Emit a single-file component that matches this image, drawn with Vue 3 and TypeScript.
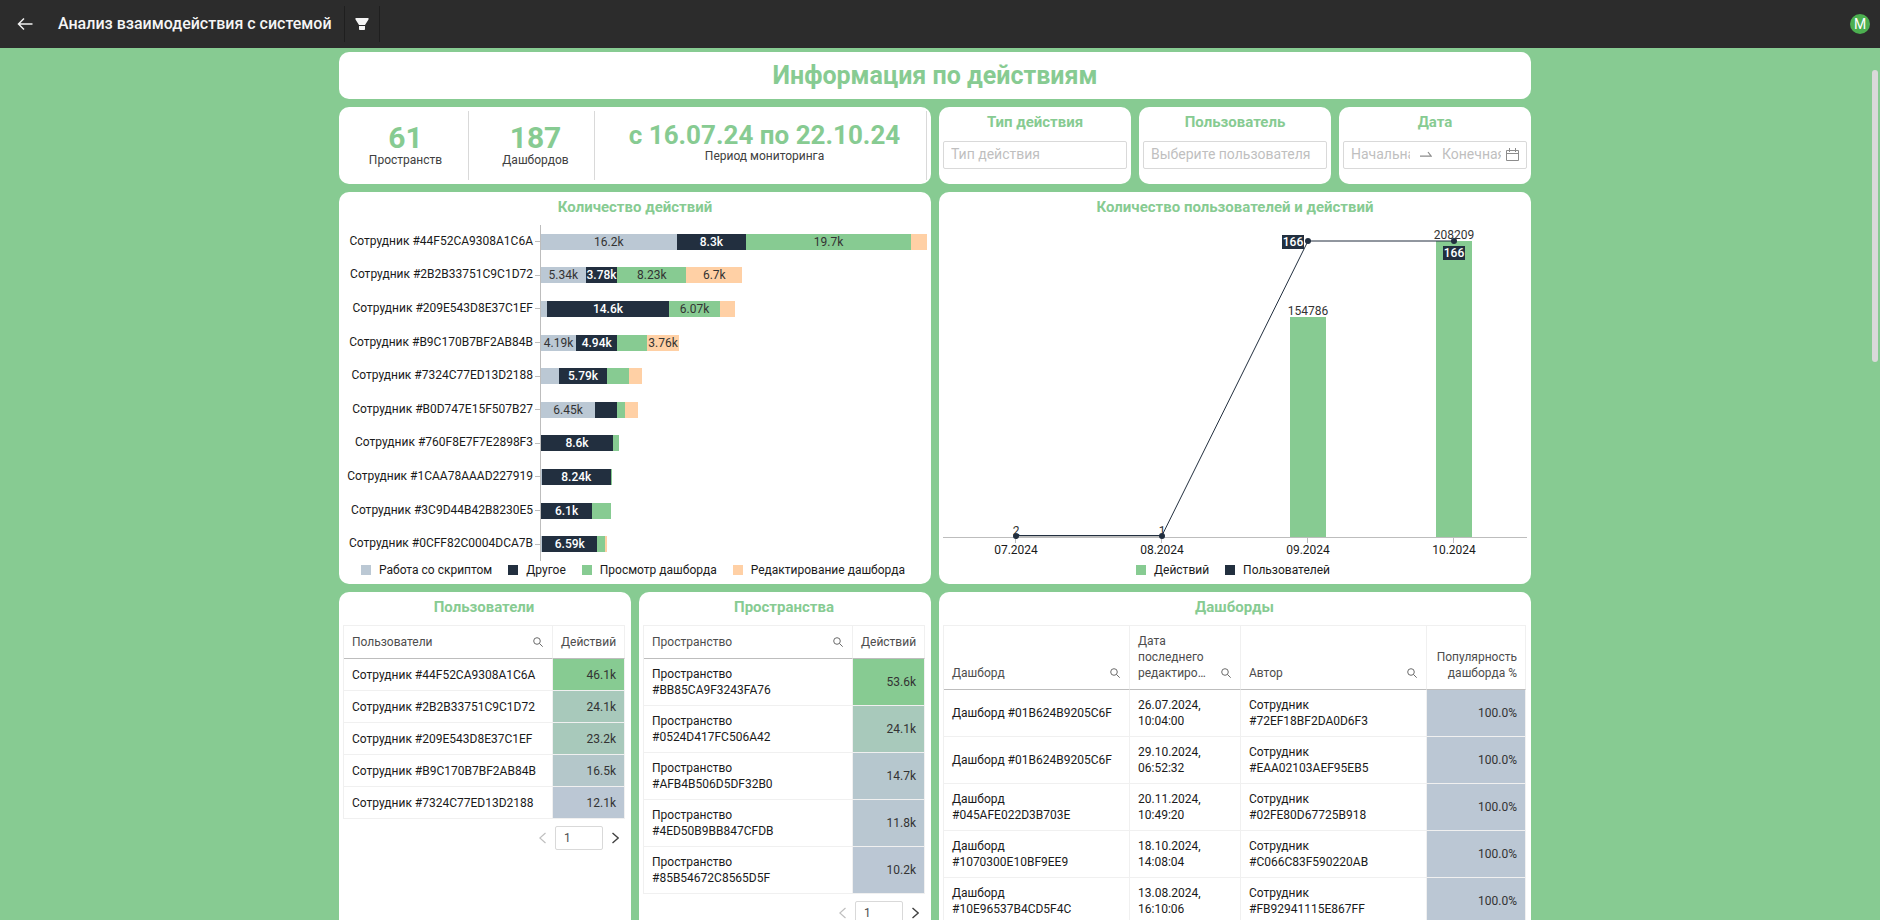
<script setup lang="ts">
import { ref } from 'vue'

interface Segment {
  key: string
  value: number
  text?: string
}
interface BarRow {
  name: string
  segments: Segment[]
}
interface RankRow {
  name: string
  value: string
  tone: string
}

const keys = ['script', 'other', 'view', 'edit']
const maxTotal = 46.1

function bar(name: string, values: number[], texts: string[]): BarRow {
  return {
    name: 'Сотрудник #' + name,
    segments: values.map((value, i) => ({ key: keys[i], value, text: texts[i] })),
  }
}

const bars: BarRow[] = [
  bar('44F52CA9308A1C6A', [16.2, 8.3, 19.7, 1.9], ['16.2k', '8.3k', '19.7k', '']),
  bar('2B2B33751C9C1D72', [5.34, 3.78, 8.23, 6.7], ['5.34k', '3.78k', '8.23k', '6.7k']),
  bar('209E543D8E37C1EF', [0.7, 14.6, 6.07, 1.76], ['', '14.6k', '6.07k', '']),
  bar('B9C170B7BF2AB84B', [4.19, 4.94, 3.57, 3.76], ['4.19k', '4.94k', '', '3.76k']),
  bar('7324C77ED13D2188', [2.13, 5.79, 2.65, 1.53], ['', '5.79k', '', '']),
  bar('B0D747E15F507B27', [6.45, 2.65, 0.9, 1.55], ['6.45k', '', '', '']),
  bar('760F8E7F7E2898F3', [0, 8.6, 0.7, 0], ['', '8.6k', '', '']),
  bar('1CAA78AAAD227919', [0.1, 8.24, 0.2, 0], ['', '8.24k', '', '']),
  bar('3C9D44B42B8230E5', [0, 6.1, 2.25, 0], ['', '6.1k', '', '']),
  bar('0CFF82C0004DCA7B', [0.15, 6.59, 0.93, 0.2], ['', '6.59k', '', '']),
]

const actionLegend = [
  { key: 'script', label: 'Работа со скриптом' },
  { key: 'other', label: 'Другое' },
  { key: 'view', label: 'Просмотр дашборда' },
  { key: 'edit', label: 'Редактирование дашборда' },
]
const userLegend = [
  { key: 'view', label: 'Действий' },
  { key: 'other', label: 'Пользователей' },
]

const months = [
  { x: 73, label: '07.2024', value: 2, top: 312, dot: 311 },
  { x: 219, label: '08.2024', value: 1, top: 312, dot: 311 },
  { x: 365, label: '09.2024', value: 154786, top: 92, dot: 16 },
  { x: 511, label: '10.2024', value: 208209, top: 16, dot: 16 },
]

const rankings: { title: string; column: string; id: string; rows: RankRow[] }[] = [
  {
    title: 'Пользователи',
    column: 'Пользователи',
    id: 'users',
    rows: [
      { name: 'Сотрудник #44F52CA9308A1C6A', value: '46.1k', tone: 'tone-1' },
      { name: 'Сотрудник #2B2B33751C9C1D72', value: '24.1k', tone: 'tone-2' },
      { name: 'Сотрудник #209E543D8E37C1EF', value: '23.2k', tone: 'tone-2' },
      { name: 'Сотрудник #B9C170B7BF2AB84B', value: '16.5k', tone: 'tone-3' },
      { name: 'Сотрудник #7324C77ED13D2188', value: '12.1k', tone: 'tone-5' },
    ],
  },
  {
    title: 'Пространства',
    column: 'Пространство',
    id: 'spaces',
    rows: [
      { name: 'Пространство #BB85CA9F3243FA76', value: '53.6k', tone: 'tone-1' },
      { name: 'Пространство #0524D417FC506A42', value: '24.1k', tone: 'tone-2' },
      { name: 'Пространство #AFB4B506D5DF32B0', value: '14.7k', tone: 'tone-4' },
      { name: 'Пространство #4ED50B9BB847CFDB', value: '11.8k', tone: 'tone-6' },
      { name: 'Пространство #85B54672C8565D5F', value: '10.2k', tone: 'tone-5' },
    ],
  },
]

const dashboards = [
  { name: '01B624B9205C6F', date: '26.07.2024, 10:04:00', author: '72EF18BF2DA0D6F3' },
  { name: '01B624B9205C6F', date: '29.10.2024, 06:52:32', author: 'EAA02103AEF95EB5' },
  { name: '045AFE022D3B703E', date: '20.11.2024, 10:49:20', author: '02FE80D67725B918' },
  { name: '1070300E10BF9EE9', date: '18.10.2024, 14:08:04', author: 'C066C83F590220AB' },
  { name: '10E96537B4CD5F4C', date: '13.08.2024, 16:10:06', author: 'FB92941115E867FF' },
]

const pages = ref<Record<string, string>>({ users: '1', spaces: '1' })
</script>

<template>
  <div class="app">
    <header class="topbar">
      <button class="icon-btn back" aria-label="Назад">
        <svg width="16" height="14" viewBox="0 0 16 14" fill="none" stroke="#f0f0f0" stroke-width="1.5">
          <path d="M15.5 7H1.5M7 1.5L1.5 7L7 12.5" />
        </svg>
      </button>
      <h1 class="topbar-title">Анализ взаимодействия с системой</h1>
      <button class="icon-btn filter" aria-label="Фильтр">
        <svg width="14" height="12" viewBox="0 0 14 12" fill="#f5f5f5">
          <path d="M0.5 0H13.5V1.5L10 7H4L0.5 1.5ZM4 8H10V11.2L9.5 12H4.5L4 11.2Z" />
        </svg>
      </button>
      <button class="avatar" aria-label="Профиль">M</button>
    </header>

    <div class="viewport">
      <main class="board">
        <section class="card hero"><h2>Информация по действиям</h2></section>

        <section class="card kpis">
          <div class="kpi"><strong>61</strong><span>Пространств</span></div>
          <div class="kpi"><strong>187</strong><span>Дашбордов</span></div>
          <div class="kpi wide"><strong>с 16.07.24 по 22.10.24</strong><span>Период мониторинга</span></div>
        </section>

        <section class="card filter-card">
          <label class="card-title" for="action-type">Тип действия</label>
          <input id="action-type" class="field" type="text" placeholder="Тип действия" />
        </section>
        <section class="card filter-card">
          <label class="card-title" for="user-name">Пользователь</label>
          <input id="user-name" class="field" type="text" placeholder="Выберите пользователя" />
        </section>
        <section class="card filter-card">
          <label class="card-title" for="date-from">Дата</label>
          <div class="field range">
            <input id="date-from" type="text" placeholder="Начальная дата" />
            <svg class="range-arrow" width="12" height="6" viewBox="0 0 12 6" fill="none" stroke="#8c8c8c" stroke-width="1.2">
              <path d="M0 5.2H11.2L8 1" />
            </svg>
            <input type="text" placeholder="Конечная дата" aria-label="Конечная дата" />
            <svg class="calendar" width="13" height="13" viewBox="0 0 13 13" fill="none" stroke="#8c8c8c">
              <path d="M0.5 2.5H12.5V12.5H0.5ZM0.5 5.5H12.5M3.5 0V4M9.5 0V4" />
            </svg>
          </div>
        </section>

        <section class="card chart">
          <h3 class="card-title">Количество действий</h3>
          <div class="bars">
            <div v-for="row in bars" :key="row.name" class="bar-row">
              <span class="bar-name">{{ row.name }}</span>
              <i class="tick"></i>
              <div class="track">
                <span
                  v-for="seg in row.segments"
                  :key="seg.key"
                  class="segment"
                  :class="seg.key"
                  :style="{ width: (seg.value / maxTotal) * 100 + '%' }"
                >{{ seg.text }}</span>
              </div>
            </div>
          </div>
          <ul class="legend">
            <li v-for="item in actionLegend" :key="item.key"><i :class="item.key"></i>{{ item.label }}</li>
          </ul>
        </section>

        <section class="card chart">
          <h3 class="card-title">Количество пользователей и действий</h3>
          <svg class="combo" viewBox="0 0 584 336" role="img" aria-label="Количество пользователей и действий">
            <rect x="73" y="311" width="146" height="2" fill="#bdbdbd" />
            <rect x="347" y="92" width="36" height="220" fill="#87cb92" />
            <rect x="493" y="16" width="36" height="296" fill="#87cb92" />
            <path d="M0 312.5H584" stroke="#bdbdbd" />
            <path v-for="m in months" :key="'t' + m.x" :d="`M${m.x - 0.5} 313V318`" stroke="#bdbdbd" />
            <text v-for="m in months" :key="'v' + m.x" :x="m.x" :y="m.top - 2" class="chart-text dark">{{ m.value }}</text>
            <path d="M73 310.5H219L365 16H511" fill="none" stroke="#222f3f" />
            <circle v-for="m in months" :key="'d' + m.x" :cx="m.x" :cy="m.dot" r="3" fill="#222f3f" />
            <rect x="339" y="10" width="22" height="14" fill="#222f3f" />
            <text x="350" y="21" class="chart-text light">166</text>
            <rect x="500" y="21" width="22" height="14" fill="#222f3f" />
            <text x="511" y="32" class="chart-text light">166</text>
            <text v-for="m in months" :key="'l' + m.x" :x="m.x" y="329" class="chart-text">{{ m.label }}</text>
          </svg>
          <ul class="legend">
            <li v-for="item in userLegend" :key="item.key"><i :class="item.key"></i>{{ item.label }}</li>
          </ul>
        </section>

        <section v-for="rank in rankings" :key="rank.id" class="card list">
          <h3 class="card-title">{{ rank.title }}</h3>
          <table>
            <colgroup><col /><col class="col-value" /></colgroup>
            <thead>
              <tr>
                <th scope="col">
                  <div class="th-inner">
                    <span>{{ rank.column }}</span>
                    <button class="search" :aria-label="'Поиск: ' + rank.column">
                      <svg width="10" height="10" viewBox="0 0 10 10" fill="none" stroke="#6b6b6b">
                        <circle cx="4" cy="4" r="3.3" /><path d="M6.4 6.4L9.7 9.7" />
                      </svg>
                    </button>
                  </div>
                </th>
                <th scope="col" class="num">Действий</th>
              </tr>
            </thead>
            <tbody>
              <tr v-for="row in rank.rows" :key="row.name">
                <td :class="{ narrow: rank.id === 'spaces' }">{{ row.name }}</td>
                <td class="num" :class="row.tone">{{ row.value }}</td>
              </tr>
            </tbody>
          </table>
          <nav class="pager" :aria-label="rank.title">
            <button aria-label="Предыдущая страница" disabled>
              <svg width="7" height="12" viewBox="0 0 7 12" fill="none" stroke="#bfbfbf" stroke-width="1.2"><path d="M6.5 1L0.8 6L6.5 11" /></svg>
            </button>
            <input v-model="pages[rank.id]" type="text" aria-label="Номер страницы" />
            <button aria-label="Следующая страница">
              <svg width="7" height="12" viewBox="0 0 7 12" fill="none" stroke="#404040" stroke-width="1.4"><path d="M0.5 1L6.2 6L0.5 11" /></svg>
            </button>
          </nav>
        </section>

        <section class="card list boards">
          <h3 class="card-title">Дашборды</h3>
          <table>
            <colgroup><col /><col class="col-date" /><col /><col class="col-share" /></colgroup>
            <thead>
              <tr>
                <th v-for="title in ['Дашборд', 'Дата последнего редактиро…', 'Автор']" :key="title" scope="col">
                  <div class="th-inner">
                    <span>{{ title }}</span>
                    <button class="search" :aria-label="'Поиск: ' + title">
                      <svg width="10" height="10" viewBox="0 0 10 10" fill="none" stroke="#6b6b6b">
                        <circle cx="4" cy="4" r="3.3" /><path d="M6.4 6.4L9.7 9.7" />
                      </svg>
                    </button>
                  </div>
                </th>
                <th scope="col" class="num">Популярность дашборда %</th>
              </tr>
            </thead>
            <tbody>
              <tr v-for="row in dashboards" :key="row.author">
                <td>Дашборд #{{ row.name }}</td>
                <td>{{ row.date }}</td>
                <td class="narrow">Сотрудник #{{ row.author }}</td>
                <td class="num tone-5">100.0%</td>
              </tr>
            </tbody>
          </table>
        </section>
      </main>
      <div class="scrollbar"><div class="thumb"></div></div>
    </div>
  </div>
</template>

<style>
body {
  margin: 0;
  background: #87cb92;
}
</style>

<style scoped>
.app {
  display: flex;
  flex-direction: column;
  height: 100vh;
  overflow: hidden;
  font-family: Roboto, "Open Sans", sans-serif;
  font-size: 12px;
  line-height: 16px;
  color: #1a1a1a;
  background: #87cb92;
}
.app * {
  box-sizing: border-box;
}
button,
input {
  font-family: inherit;
  padding: 0;
  border: 0;
  background: none;
}
h1,
h2,
h3,
ul {
  margin: 0;
  padding: 0;
}
svg {
  display: block;
}

.topbar {
  display: flex;
  align-items: center;
  flex: none;
  height: 48px;
  padding-right: 10px;
  background: #2c2c2c;
}
.icon-btn {
  display: flex;
  align-items: center;
  justify-content: center;
}
.back {
  width: 50px;
  height: 36px;
}
.topbar-title {
  padding: 0 12px 0 8px;
  font-size: 16px;
  font-weight: 500;
  line-height: 24px;
  color: #f5f5f5;
}
.filter {
  width: 36px;
  height: 36px;
  border-left: 1px solid #1f1f1f;
  border-right: 1px solid #1f1f1f;
}
.avatar {
  width: 20px;
  height: 20px;
  margin-left: auto;
  border-radius: 50%;
  background: #4caf50;
  color: #fff;
  font-size: 14px;
  line-height: 20px;
}

.viewport {
  display: flex;
  flex: 1;
  min-height: 0;
}
.board {
  display: grid;
  grid-template-columns: repeat(12, minmax(0, 1fr));
  gap: 8px;
  flex: 1;
  align-content: start;
  max-width: 1192px;
  margin: 0 auto;
  padding-top: 4px;
}
.scrollbar {
  width: 10px;
  padding: 22px 2px 0;
}
.thumb {
  height: 292px;
  border-radius: 3px;
  background: #d9d9d9;
}

.card {
  background: #fff;
  border-radius: 10px;
}
.card-title {
  display: block;
  padding-top: 5px;
  font-size: 15px;
  font-weight: 700;
  line-height: 21px;
  text-align: center;
  color: #87cb92;
}

.hero {
  grid-column: span 12;
  text-align: center;
}
.hero h2 {
  font-size: 25px;
  font-weight: 700;
  line-height: 47px;
  color: #87cb92;
}

.kpis {
  grid-column: span 6;
  display: grid;
  grid-template-columns: 126fr 126fr 332fr;
  padding: 4px;
}
.kpi {
  display: flex;
  flex-direction: column;
  align-items: center;
  height: 69px;
  padding-top: 10px;
  border-right: 1px solid #d9d9d9;
}
.kpi + .kpi {
  padding-left: 8px;
}
.kpi strong {
  font-size: 30px;
  line-height: 33px;
  font-weight: 700;
  color: #87cb92;
}
.kpi.wide strong {
  font-size: 26px;
  line-height: 29px;
}
.kpi span {
  line-height: 12px;
  color: #404040;
}

.filter-card {
  grid-column: span 2;
  padding: 0 4px;
}
.field {
  width: 100%;
  height: 28px;
  margin-top: 8px;
  padding: 0 7px 2px;
  border: 1px solid #d9d9d9;
  border-radius: 2px;
  font-size: 14px;
  line-height: 20px;
}
input::placeholder {
  color: #bfbfbf;
  opacity: 1;
}
.range {
  display: flex;
  align-items: center;
}
.range input {
  flex: 1;
  width: 0;
  font-size: 14px;
}
.range-arrow {
  margin: 0 10px;
}
.calendar {
  margin-left: 5px;
}

.chart {
  grid-column: span 6;
  padding: 0 4px 5px;
}
.chart .card-title,
.list .card-title {
  margin-bottom: 7px;
}
.bars {
  display: flex;
  flex-direction: column;
  height: 336px;
}
.bar-row {
  display: grid;
  grid-template-columns: 192px 5px 1fr;
  align-items: center;
  flex: 1;
}
.bar-name {
  padding: 0 2px 2px 0;
  text-align: right;
  white-space: nowrap;
}
.tick {
  height: 1px;
  background: #bdbdbd;
}
.track {
  display: flex;
  align-items: center;
  height: 100%;
  border-left: 1px solid #bdbdbd;
}
.segment {
  display: flex;
  align-items: center;
  justify-content: center;
  height: 16px;
  color: #333;
}
.script {
  background: #bbc8d4;
}
.other {
  background: #222f3f;
}
.view {
  background: #87cb92;
}
.edit {
  background: #ffd0a5;
}
.segment.other {
  color: #fff;
  font-weight: 500;
}
.legend {
  display: flex;
  justify-content: center;
  gap: 16px;
  padding-right: 4px;
  line-height: 18px;
  list-style: none;
}
.legend li {
  display: flex;
  align-items: center;
  gap: 8px;
}
.legend i {
  width: 10px;
  height: 10px;
}
.combo {
  width: 100%;
}
.chart-text {
  font-size: 12px;
  text-anchor: middle;
  fill: #1a1a1a;
}
.chart-text.dark {
  fill: #333;
}
.chart-text.light {
  fill: #fff;
  font-weight: 500;
}

.list {
  grid-column: span 3;
  padding: 0 6px 8px 4px;
}
.boards {
  grid-column: span 6;
  padding-right: 5px;
}
table {
  width: 100%;
  table-layout: fixed;
  border-spacing: 0;
  border-top: 1px solid #f0f0f0;
  border-left: 1px solid #f0f0f0;
}
.col-value {
  width: 72px;
}
.col-date {
  width: 111px;
}
.col-share {
  width: 99px;
}
th,
td {
  height: 32px;
  padding: 7px 8px;
  border-right: 1px solid #f0f0f0;
  border-bottom: 1px solid #f0f0f0;
  font-weight: 400;
  text-align: left;
}
th {
  height: 33px;
  padding-bottom: 8px;
  vertical-align: bottom;
  color: #4d4d4d;
  border-bottom-color: #bdbdbd;
}
td.narrow {
  padding-right: 24px;
}
th.num,
td.num {
  text-align: right;
}
td.num {
  color: #333;
}
.th-inner {
  display: flex;
  align-items: flex-end;
  justify-content: space-between;
  gap: 8px;
}
.search {
  display: flex;
  align-items: center;
  height: 16px;
  margin-right: 1px;
}
.tone-1 {
  background: #87cb92;
}
.tone-2 {
  background: #a8c9bb;
}
.tone-3 {
  background: #b4c7ca;
}
.tone-4 {
  background: #b6c7ce;
}
.tone-6 {
  background: #b9c7d1;
}
.tone-5 {
  background: #bbc7d4;
}
.pager {
  display: flex;
  align-items: center;
  justify-content: flex-end;
  gap: 9px;
  margin-top: 7px;
  padding-right: 6px;
}
.pager input {
  width: 48px;
  height: 24px;
  padding: 0 8px;
  border: 1px solid #d9d9d9;
  border-radius: 2px;
  font-size: 12px;
  color: #4d4d4d;
}
</style>
